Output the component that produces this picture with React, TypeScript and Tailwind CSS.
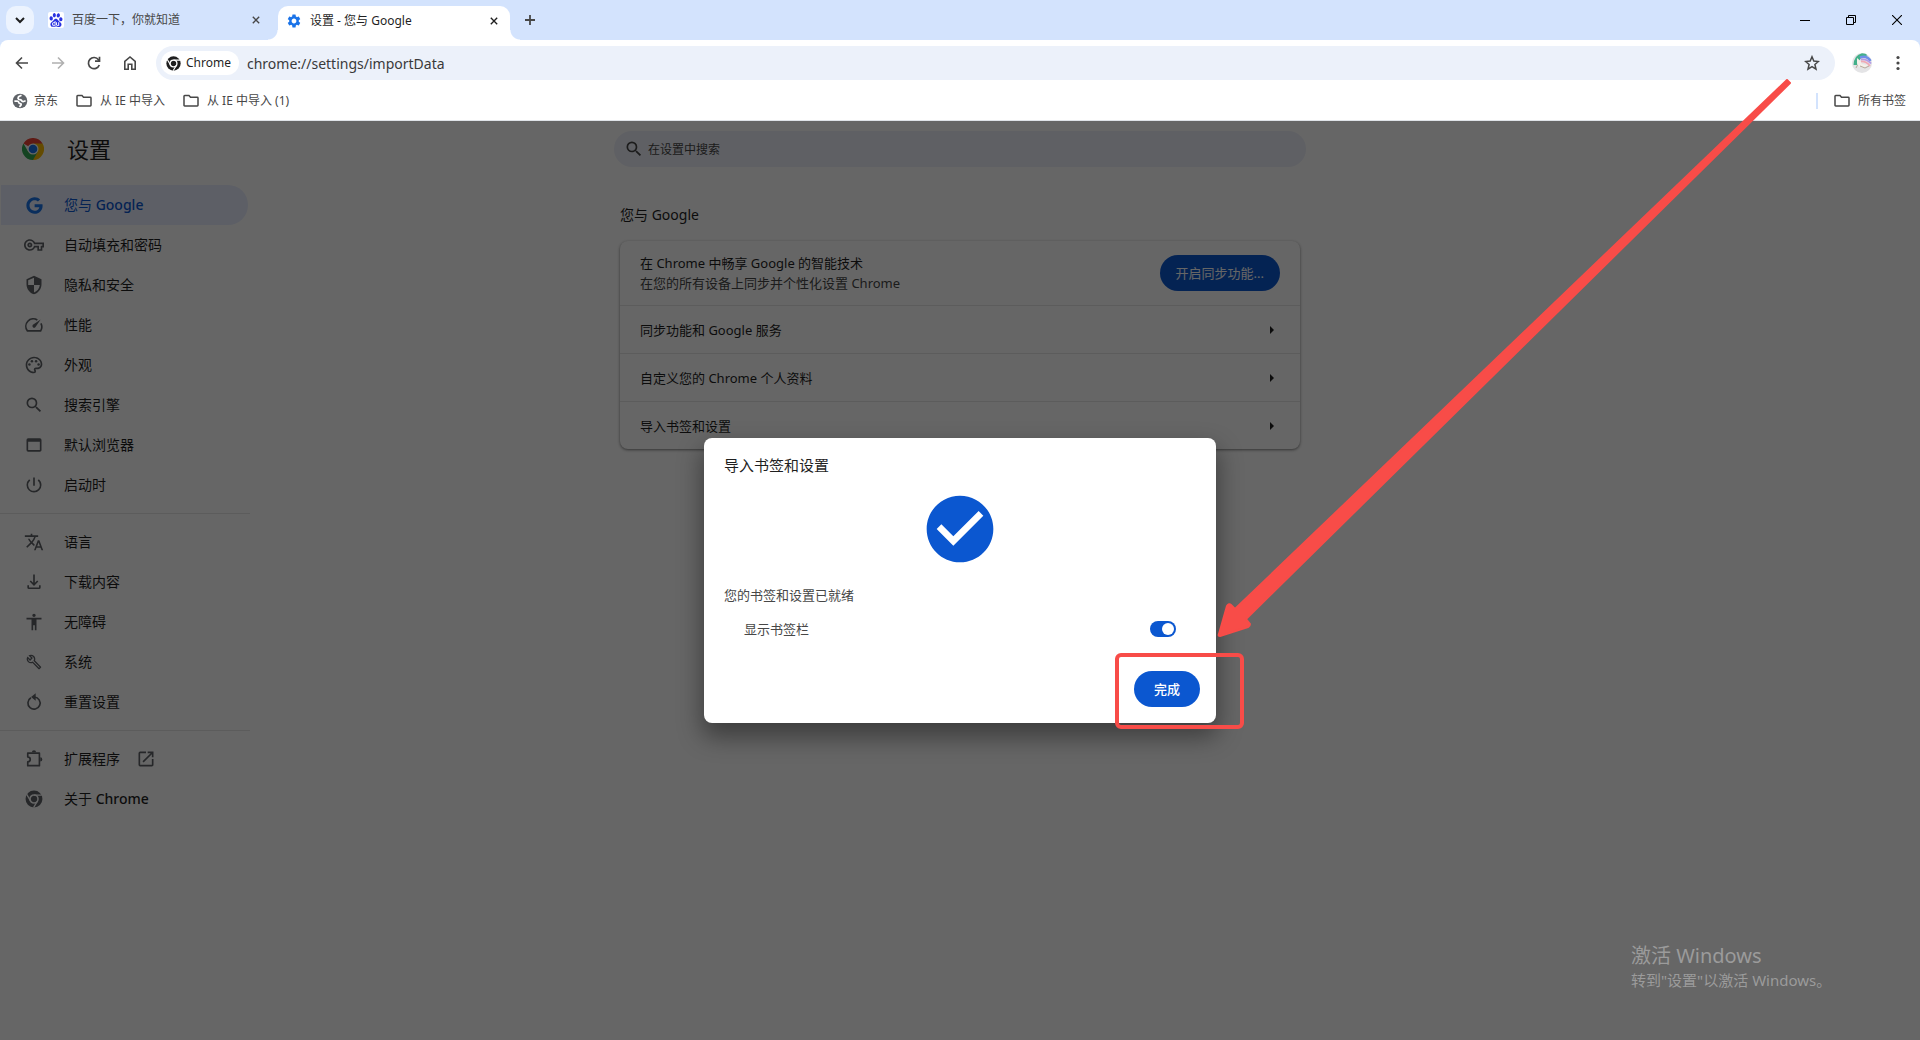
import React, { useState } from "react";
import {
  MdAccessibility,
  MdCheckCircle,
  MdOpenInNew,
  MdOutlineBuild,
  MdOutlinePalette,
  MdOutlineVpnKey,
  MdPowerSettingsNew,
  MdSearch,
  MdSecurity,
  MdSettings,
  MdTranslate,
  MdWebAsset,
} from "react-icons/md";
import { SiBaidu } from "react-icons/si";
import { FaGoogle } from "react-icons/fa";

type IconProps = { className?: string };

function Stroke({
  className = "",
  size = 24,
  width = 2,
  children,
}: IconProps & { size?: number; width?: number; children: React.ReactNode }) {
  return (
    <svg
      className={className}
      viewBox={`0 0 ${size} ${size}`}
      fill="none"
      stroke="currentColor"
      strokeWidth={width}
      aria-hidden="true"
    >
      {children}
    </svg>
  );
}

const ChevronDown = (p: IconProps) => (
  <Stroke {...p} size={10} width={2}>
    <path d="M1 3l4 4 4-4" />
  </Stroke>
);
const Cross = (p: IconProps) => (
  <Stroke {...p} size={10} width={1.7}>
    <path d="M1 1l8 8M9 1L1 9" />
  </Stroke>
);
const Plus = (p: IconProps) => (
  <Stroke {...p} size={12} width={1.8}>
    <path d="M6 1v10M1 6h10" />
  </Stroke>
);
const ArrowLeft = (p: IconProps) => (
  <Stroke {...p} size={16} width={1.6}>
    <path d="M14 8H3M8 2.5L2.5 8 8 13.5" />
  </Stroke>
);
const ArrowRight = (p: IconProps) => (
  <Stroke {...p} size={16} width={1.6}>
    <path d="M2 8h11M8 2.5L13.500 8 8 13.500" />
  </Stroke>
);
const Reload = (p: IconProps) => (
  <Stroke {...p} size={16} width={1.7}>
    <path d="M13.300 10A5.600 5.600 0 1 1 12.500 4.700L13.500 6" />
    <path d="M13.500 1.800V6.200H9" />
  </Stroke>
);
const Home = (p: IconProps) => (
  <Stroke {...p} size={16} width={1.6}>
    <path d="M2.800 6.300L8 2l5.200 4.300v8H9.800V9.300H6.200v5H2.800z" />
  </Stroke>
);
const Folder = (p: IconProps) => (
  <Stroke {...p} size={16} width={1.5}>
    <path d="M1 3.200q0-.7.700-.7H6l1.500 1.700h6.800q.7 0 .7.700v7.400q0 .7-.7.700H1.700q-.7 0-.7-.7z" />
  </Stroke>
);
const Star = (p: IconProps) => (
  <Stroke {...p} size={16} width={1.5}>
    <path d="M8 1.800l1.800 4.300 4.600.4-3.500 3 1.100 4.600L8 11.700 4 14.100l1.100-4.600-3.500-3 4.600-.4z" />
  </Stroke>
);
const Globe = ({ className = "" }: IconProps) => (
  <svg className={className} viewBox="0 0 16 16" aria-hidden="true">
    <circle cx="8" cy="8" r="7.300" fill="#5f6368" />
    <path
      d="M9.500 2.300L6.600 3.700 6 5.400q.3 1.300 2 1.300l1.400.5q.6 1.600 2.200 1.300l2-.7M2.400 8.200h2.800q1.600.2 1.800 1.800l1.200.6q1.500.2.800 1.600l-1.600 1.600"
      fill="none"
      stroke="#fff"
      strokeWidth="1.700"
    />
  </svg>
);
const ChromeMono = ({ className = "" }: IconProps) => (
  <svg className={className} viewBox="-2 -2 28 28" aria-hidden="true">
    <circle cx="12" cy="12" r="11.800" fill="currentColor" />
    <g fill="none" stroke="var(--gap)" strokeWidth="1.900">
      <circle cx="12" cy="12" r="5.600" strokeWidth="2.200" />
      <path d="M12 6.500h11M7.200 14.800L1.800 5.500M16.800 14.800L11.400 24" />
    </g>
  </svg>
);
const ChromeColor = ({ className = "" }: IconProps) => (
  <svg className={className} viewBox="0 0 24 24" aria-hidden="true">
    <path d="M12 12L1.600 6A12 12 0 0 1 22.400 6z" fill="#ea4335" />
    <path d="M12 12V6h10.400A12 12 0 0 1 12 24z" fill="#fbbc04" />
    <path d="M1.600 6L6.800 15 12 12l5.200 3L12 24A12 12 0 0 1 1.600 6z" fill="#34a853" />
    <circle cx="12" cy="12" r="6" fill="#fff" />
    <circle cx="12" cy="12" r="4.700" fill="#1a73e8" />
  </svg>
);
const Speed = ({ className = "" }: IconProps) => (
  <Stroke className={className} size={24} width={2}>
    <path d="M16 6A9 9 0 0 0 4 19H20A9 9 0 0 0 20.300 10" />
    <path d="M20 5.500l-9.300 6.300a2 2 0 1 0 2.900 2.900z" fill="currentColor" stroke="none" />
  </Stroke>
);
const Download = (p: IconProps) => (
  <Stroke {...p}>
    <path d="M12 3v12M7.500 10.800l4.500 4.500 4.500-4.500M5 16v2.500q0 1 1 1h12q1 0 1-1V16" />
  </Stroke>
);
const Wrench = ({ className = "" }: IconProps) => <MdOutlineBuild className={`${className} p-[2px]`} />;
const Reset = (p: IconProps) => (
  <Stroke {...p}>
    <path d="M8.300 7A7.300 7.300 0 1 0 12.500 6" />
    <path d="M14 1.500v9l-5.500-4.500z" fill="currentColor" stroke="none" />
  </Stroke>
);
const Puzzle = (p: IconProps) => (
  <Stroke {...p}>
    <path d="M4.500 5h14v15h-14v-4.500q3-.5 3-3t-3-3z" strokeLinejoin="round" />
    <path d="M9.500 4a2.500 2.500 0 0 1 5 0zM19.500 10a2.500 2.500 0 0 1 0 5z" fill="currentColor" stroke="none" />
  </Stroke>
);
const Avatar = ({ className = "" }: IconProps) => (
  <svg className={className} viewBox="0 0 20 20" aria-hidden="true">
    <circle cx="10" cy="10" r="10" fill="#e4e4e6" />
    <path d="M1.500 12Q2 2 10 .2q4 0 5.500 2L9 5 5 12z" fill="#43b08a" />
    <path d="M8 4.500q7-2.500 10.500 3.500" stroke="#6f8fe8" strokeWidth="2.600" fill="none" />
    <path d="M9 6.500q6-1 10 4" stroke="#b39be6" strokeWidth="1.800" fill="none" />
    <path d="M9 8.500q5-.5 9 4.500" stroke="#f0a9b5" strokeWidth="1.800" fill="none" />
    <path d="M5 5l3 2.500 2 3.500 6 1-3 2.500-6-1-2-3z" fill="#f5efe9" />
    <path d="M5.500 12l-1.500 3M8 13l5 2 4-2" stroke="#b8aa9c" strokeWidth="1" fill="none" />
  </svg>
);

type NavItem = {
  icon: React.ComponentType<IconProps>;
  text: string;
  latin?: string;
  active?: boolean;
  external?: boolean;
};

const navGroups: NavItem[][] = [
  [
    { icon: FaGoogle, text: "您与", latin: "Google", active: true },
    { icon: MdOutlineVpnKey, text: "自动填充和密码" },
    { icon: MdSecurity, text: "隐私和安全" },
    { icon: Speed, text: "性能" },
    { icon: MdOutlinePalette, text: "外观" },
    { icon: MdSearch, text: "搜索引擎" },
    { icon: MdWebAsset, text: "默认浏览器" },
    { icon: MdPowerSettingsNew, text: "启动时" },
  ],
  [
    { icon: MdTranslate, text: "语言" },
    { icon: Download, text: "下载内容" },
    { icon: MdAccessibility, text: "无障碍" },
    { icon: Wrench, text: "系统" },
    { icon: Reset, text: "重置设置" },
  ],
  [
    { icon: Puzzle, text: "扩展程序", external: true },
    { icon: ChromeMono, text: "关于", latin: "Chrome" },
  ],
];

const iconButton = "flex size-9 items-center justify-center";

function TabStrip() {
  return (
    <div className="flex h-10 items-center bg-[#d3e3fd]">
      <button
        aria-label="搜索标签页"
        className="ml-[6px] flex h-7 w-7 items-center justify-center rounded-[10px] bg-[#ecf3fe] text-[#1f1f1f]"
      >
        <ChevronDown className="size-[10px]" />
      </button>
      <div className="ml-2 flex h-8 w-[236px] items-center pl-[6px] pr-[18px]">
        <span className="flex size-4 items-center justify-center rounded-xs bg-white">
          <SiBaidu className="size-[14px] text-[#2932e1]" />
        </span>
        <span className="ml-2 flex-1 text-xs text-[#474747]">百度一下，你就知道</span>
        <button aria-label="关闭标签页" className="text-[#474747]">
          <Cross className="size-2" />
        </button>
      </div>
      <div className="relative flex h-[34px] w-[232px] items-center self-end rounded-t-[10px] bg-white pb-1 pl-2 pr-3">
        <span className="absolute bottom-0 -left-[10px] size-[10px] bg-[radial-gradient(circle_at_0_0,transparent_9px,#fff_10px)]" />
        <span className="absolute bottom-0 -right-[10px] size-[10px] bg-[radial-gradient(circle_at_100%_0,transparent_9px,#fff_10px)]" />
        <MdSettings className="size-4 text-[#1a73e8]" />
        <span className="ml-2 flex-1 text-xs text-[#1f1f1f]">设置 - 您与 Google</span>
        <button aria-label="关闭标签页" className="text-[#1f1f1f]">
          <Cross className="size-2" />
        </button>
      </div>
      <button aria-label="新标签页" className="ml-2 flex size-6 items-center justify-center text-[#474747]">
        <Plus className="size-3" />
      </button>
      <div className="ml-auto flex h-10 text-black">
        <button aria-label="最小化" className="flex w-[46px] items-center justify-center">
          <Stroke className="size-[10px]" size={10} width={1}>
            <path d="M0 5.500h10" />
          </Stroke>
        </button>
        <button aria-label="还原" className="flex w-[46px] items-center justify-center">
          <Stroke className="size-[10px]" size={10} width={1}>
            <path d="M.5 2.500h7v7h-7zM2.500 2.500v-2h7v7h-2" />
          </Stroke>
        </button>
        <button aria-label="关闭" className="flex w-[46px] items-center justify-center">
          <Stroke className="size-[10px]" size={10} width={1.100}>
            <path d="M0 0l10 10M10 0L0 10" />
          </Stroke>
        </button>
      </div>
    </div>
  );
}

function Toolbar() {
  return (
    <div className="bg-[#d3e3fd]">
      <div className="flex items-center rounded-t-lg bg-white px-1 pt-[5px]">
        <button aria-label="后退" className={`${iconButton} text-[#474747]`}>
          <ArrowLeft className="size-4" />
        </button>
        <button aria-label="前进" className={`${iconButton} text-[#b0b0b0]`}>
          <ArrowRight className="size-4" />
        </button>
        <button aria-label="重新加载" className={`${iconButton} text-[#474747]`}>
          <Reload className="size-4" />
        </button>
        <button aria-label="主页" className={`${iconButton} text-[#474747]`}>
          <Home className="size-4" />
        </button>
        <div className="ml-2 flex h-[34px] flex-1 items-center rounded-full bg-[#ecf1fa] pl-[5px] pr-[15px]">
          <button className="flex h-6 items-center gap-1 rounded-full bg-white pl-1 pr-2 text-xs text-[#1f1f1f] [--gap:#fff]">
            <ChromeMono className="size-[17px]" />
            Chrome
          </button>
          <input
            aria-label="地址栏"
            defaultValue="chrome://settings/importData"
            className="ml-2 h-6 min-w-0 flex-1 bg-transparent text-sm text-[#3a3a3a] outline-none"
          />
          <button aria-label="为此标签页添加书签" className="text-[#474747]">
            <Star className="size-4" />
          </button>
        </div>
        <button aria-label="用户" className="ml-[17px]">
          <Avatar className="size-5" />
        </button>
        <button aria-label="菜单" className={`${iconButton} ml-2 text-[#474747]`}>
          <svg className="size-4" viewBox="0 0 16 16" fill="currentColor" aria-hidden="true">
            <circle cx="8" cy="2.500" r="1.600" />
            <circle cx="8" cy="8" r="1.600" />
            <circle cx="8" cy="13.500" r="1.600" />
          </svg>
        </button>
      </div>
    </div>
  );
}

function BookmarkBar() {
  return (
    <div className="flex h-10 items-center border-b border-[#dfe3e8] bg-white pl-3 pr-[14px] text-xs text-[#474747]">
      <a href="#jd" className="flex items-center gap-[6px]">
        <Globe className="size-4" />
        京东
      </a>
      <a href="#ie" className="ml-[18px] flex items-center gap-2">
        <Folder className="size-4" />从 IE 中导入
      </a>
      <a href="#ie1" className="ml-[18px] flex items-center gap-2">
        <Folder className="size-4" />从 IE 中导入 (1)
      </a>
      <span className="ml-auto h-4 w-[2px] bg-[#d3e3fd]" />
      <button className="ml-4 flex items-center gap-2">
        <Folder className="size-4" />
        所有书签
      </button>
    </div>
  );
}

function Sidebar() {
  return (
    <aside className="w-[250px] shrink-0">
      <div className="flex h-16 items-center gap-[23px] pb-2 pl-[22px]">
        <ChromeColor className="size-[22px]" />
        <h1 className="text-[22px] leading-8 text-[#1f1f1f]">设置</h1>
      </div>
      <nav aria-label="设置">
        {navGroups.map((group, index) => (
          <ul key={index} className={index > 0 ? "mt-2 border-t border-black/10 pt-2" : ""}>
            {group.map(({ icon: Icon, text, latin, active, external }) => (
              <li key={text}>
                <a
                  href={`#${text}`}
                  aria-current={active ? "page" : undefined}
                  className={
                    active
                      ? "ml-px mr-[2px] flex h-10 items-center rounded-r-full bg-[#e8eeff] pl-[23px] text-sm text-[#0b57d0]"
                      : "ml-px flex h-10 items-center pl-[23px] text-sm text-[#1f1f1f]"
                  }
                >
                  <span className="flex size-5 items-center justify-center">
                    <Icon
                      className={active ? "size-[17px] text-[#1a73e8]" : "size-5 text-[#5f6368] [--gap:#fff]"}
                    />
                  </span>
                  <span className="ml-5">
                    {text}
                    {latin && <span className="font-medium"> {latin}</span>}
                  </span>
                  {external && <MdOpenInNew className="ml-4 size-5 text-[#5f6368]" />}
                </a>
              </li>
            ))}
          </ul>
        ))}
      </nav>
    </aside>
  );
}

function SettingsPage() {
  return (
    <div className="mx-auto w-[692px] pt-[10px]">
      <label className="flex h-9 items-center gap-1 rounded-full bg-[#edf0fa] px-[10px]">
        <MdSearch className="size-5 text-[#474747]" />
        <input
          aria-label="在设置中搜索"
          placeholder="在设置中搜索"
          className="h-6 min-w-0 flex-1 bg-transparent text-xs outline-none placeholder:text-[#474747]"
        />
      </label>
      <div className="px-[6px]">
        <h2 className="mt-[38px] text-sm leading-5 text-[#1f1f1f]">您与 Google</h2>
        <section className="mt-4 rounded-lg bg-white text-[13px] leading-5 text-[#1f1f1f] shadow-[0_1px_3px_0_rgba(0,0,0,0.5)]">
          <div className="flex h-16 items-center justify-between px-5">
            <div>
              <p>在 Chrome 中畅享 Google 的智能技术</p>
              <p className="text-[#474747]">在您的所有设备上同步并个性化设置 Chrome</p>
            </div>
            <button className="h-9 rounded-full bg-[#0b57d0] px-4 text-white">开启同步功能...</button>
          </div>
          {["同步功能和 Google 服务", "自定义您的 Chrome 个人资料", "导入书签和设置"].map((row) => (
            <button
              key={row}
              className="flex h-12 w-full items-center justify-between border-t border-black/10 pl-5 pr-[26px] text-left"
            >
              {row}
              <svg className="h-2 w-1" viewBox="0 0 4 8" aria-hidden="true">
                <path d="M0 0l4 4-4 4z" fill="#1f1f1f" />
              </svg>
            </button>
          ))}
        </section>
      </div>
    </div>
  );
}

function ImportDialog() {
  const [shown, setShown] = useState(true);
  return (
    <div
      role="dialog"
      aria-modal="true"
      aria-labelledby="import-title"
      className="relative flex w-lg flex-col rounded-lg bg-white pb-4 pt-[15px] text-[13px] leading-5 text-[#474747] shadow-[0_12px_24px_2px_rgba(0,0,0,0.4)]"
    >
      <h2 id="import-title" className="px-5 text-[15px] leading-6 text-[#1f1f1f]">
        导入书签和设置
      </h2>
      <MdCheckCircle className="mt-3 size-20 self-center text-[#0b57d0]" />
      <p className="mt-4 px-5">您的书签和设置已就绪</p>
      <label className="mt-[14px] flex items-center justify-between px-10">
        显示书签栏
        <input
          type="checkbox"
          role="switch"
          checked={shown}
          onChange={(e) => setShown(e.target.checked)}
          className="peer sr-only"
        />
        <span className="flex h-4 w-[26px] items-center rounded-full bg-[#747775] px-[2px] peer-checked:justify-end peer-checked:bg-[#0b57d0]">
          <span className="size-3 rounded-full bg-white" />
        </span>
      </label>
      <div className="mt-8 flex justify-end pr-4">
        <button className="h-9 rounded-full bg-[#0b57d0] px-5 font-medium text-white">完成</button>
      </div>
      <span className="pointer-events-none absolute -bottom-[6px] -right-7 h-[76px] w-[129px] rounded-md border-4 border-[#f84c48]" />
      <svg
        className="pointer-events-none absolute -top-[359px] left-[512px] h-[560px] w-[576px]"
        viewBox="0 0 576 560"
        aria-hidden="true"
      >
        <path
          d="M571 1L574 4 30 540 34 545Q34 547 32 548L4 557Q2 557 3 555L11 527Q13 524 15 526L19 530z"
          fill="#f84c48"
          stroke="#f84c48"
          strokeWidth="2"
          strokeLinejoin="round"
        />
      </svg>
    </div>
  );
}

export default function App() {
  return (
    <div className="flex min-h-screen flex-col overflow-hidden bg-white font-['Noto_Sans','Noto_Sans_CJK_SC',sans-serif]">
      <header>
        <TabStrip />
        <Toolbar />
        <BookmarkBar />
      </header>
      <main className="relative flex flex-1">
        <Sidebar />
        <div className="flex-1 pr-[250px]">
          <SettingsPage />
        </div>
        <div className="absolute inset-0 flex items-center justify-center bg-black/60">
          <ImportDialog />
          <div className="absolute bottom-[50px] right-[88px] w-[201px] whitespace-nowrap text-[#9b9b9b]">
            <p className="text-xl leading-7">激活 Windows</p>
            <p className="text-[15px] leading-5">转到"设置"以激活 Windows。</p>
          </div>
        </div>
      </main>
    </div>
  );
}
